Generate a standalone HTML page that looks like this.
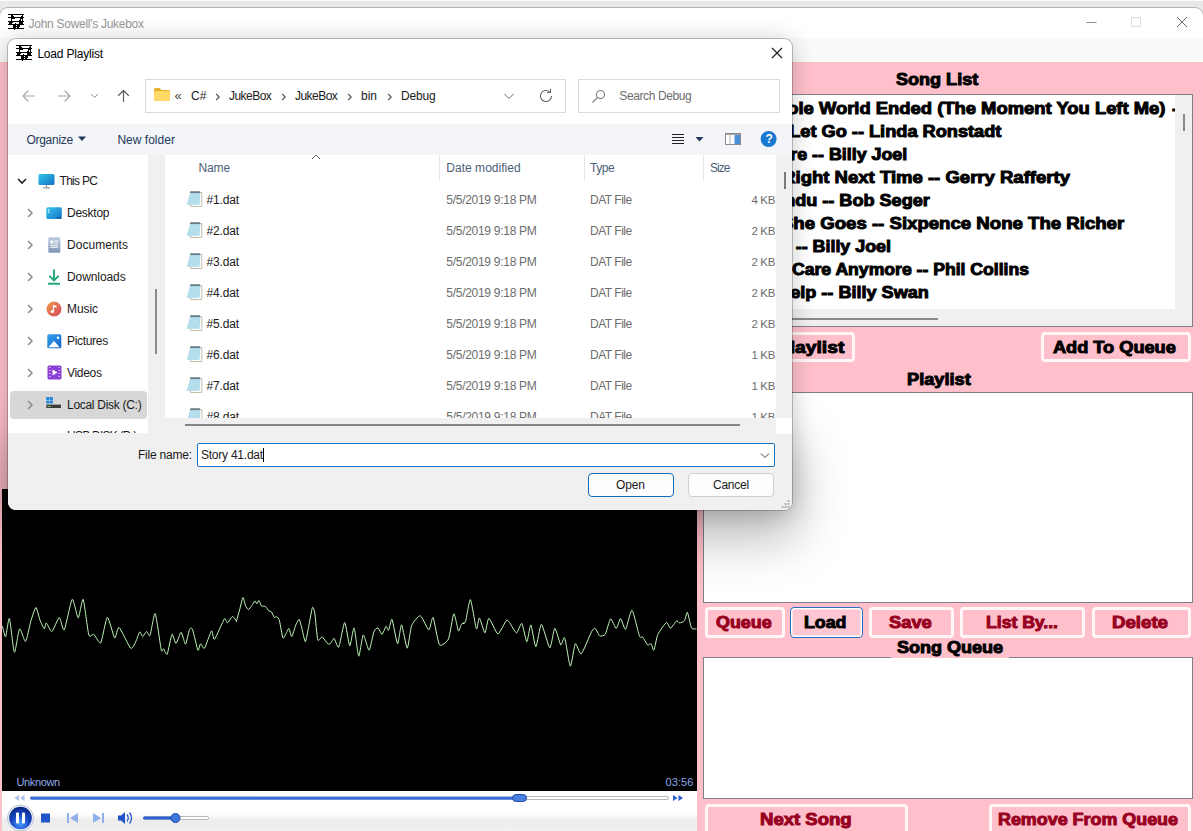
<!DOCTYPE html>
<html><head><meta charset="utf-8"><title>John Sowell's Jukebox</title>
<style>
html,body{margin:0;padding:0;}
body{width:1203px;height:831px;overflow:hidden;position:relative;background:#e9e9e9;font-family:"Liberation Sans",sans-serif;}
.a{position:absolute;display:block;}
.t{position:absolute;white-space:nowrap;display:block;}
#win{left:0;top:8px;width:1203px;height:840px;background:#fff;border-radius:8px 8px 0 0;box-shadow:0 0 0 1px #b4b4b4;overflow:hidden;}
.pb{position:absolute;box-sizing:border-box;border:3px solid #fff6f8;border-radius:4px;background:#ffc0cb;}
.pb.focus{border:1px solid #2a6fc0;box-shadow:inset 0 0 0 1.5px #fff;background:#ffc7d1;border-radius:4px;}
.lb{position:absolute;box-sizing:border-box;border:1px solid #7f7f86;background:#fff;overflow:hidden;}
#dlg{left:8px;top:39px;width:784px;height:471px;background:#fff;border-radius:8px;box-shadow:0 0 0 1px rgba(0,0,0,.22),0 2px 24px rgba(0,0,0,.22);}
</style></head><body>

<div class="a" style="left:0;top:0;width:1203px;height:1px;background:#fbfbfb"></div>
<div id="win" class="a">
<div class="a" style="left:0;top:30px;width:1203px;height:24px;background:#fafafa"></div>
<div class="a" style="left:0;top:54px;width:1203px;height:790px;background:#ffc0cb"></div>
</div>
<svg class="a" style="left:8px;top:14px" width="16" height="16" viewBox="0 0 16 16" shape-rendering="crispEdges"><rect x="0" y="0" width="16" height="1" fill="#000"/><rect x="3" y="1" width="2" height="1" fill="#000"/><rect x="14" y="1" width="1" height="1" fill="#000"/><rect x="3" y="2" width="3" height="1" fill="#000"/><rect x="13" y="2" width="2" height="1" fill="#000"/><rect x="0" y="3" width="16" height="1" fill="#000"/><rect x="3" y="4" width="2" height="1" fill="#000"/><rect x="5" y="4" width="2" height="1" fill="#000"/><rect x="12" y="4" width="3" height="1" fill="#000"/><rect x="3" y="5" width="1" height="1" fill="#000"/><rect x="12" y="5" width="1" height="1" fill="#000"/><rect x="14" y="5" width="1" height="1" fill="#000"/><rect x="3" y="6" width="1" height="1" fill="#000"/><rect x="11" y="6" width="2" height="1" fill="#000"/><rect x="14" y="6" width="1" height="1" fill="#000"/><rect x="0" y="7" width="16" height="1" fill="#000"/><rect x="1" y="8" width="4" height="1" fill="#000"/><rect x="11" y="8" width="4" height="1" fill="#000"/><rect x="1" y="9" width="3" height="1" fill="#000"/><rect x="7" y="9" width="1" height="1" fill="#000"/><rect x="11" y="9" width="4" height="1" fill="#000"/><rect x="0" y="10" width="16" height="1" fill="#000"/><rect x="5" y="11" width="3" height="1" fill="#000"/><rect x="9" y="11" width="3" height="1" fill="#000"/><rect x="5" y="12" width="7" height="1" fill="#000"/><rect x="5" y="13" width="3" height="1" fill="#000"/><rect x="9" y="13" width="2" height="1" fill="#000"/><rect x="0" y="14" width="16" height="1" fill="#000"/><rect x="6" y="15" width="1" height="1" fill="#000"/></svg>
<span class="t" style="font-size:12px;line-height:12px;top:18.00px;color:#9a9a9a;left:28.60px;letter-spacing:-0.284px;">John Sowell's Jukebox</span>
<svg class="a" style="left:1080px;top:12px" width="120" height="22" viewBox="0 0 120 22" fill="none"><path d="M6.5 10.5H16.500" stroke="#8a8a8a" stroke-width="1"/><rect x="51.500" y="5.500" width="9" height="9" stroke="#e0e0e0" stroke-width="1"/><path d="M97 5L107 15M107 5L97 15" stroke="#6a6a6a" stroke-width="1"/></svg>
<div class="a" style="left:2px;top:489px;width:695px;height:302px;background:#000"></div>
<svg class="a" style="left:0;top:560px" width="700" height="130" viewBox="0 560 700 130"><path fill="none" stroke="#c0f7ba" stroke-width="1" d="M2.4 625.9C2.7 627.0 4.9 637.6 5.6 636.9C6.3 636.1 8.5 617.0 9.4 618.5C10.3 620.0 13.3 651.2 14.4 652.2C15.4 653.3 18.4 630.0 19.6 628.9C20.7 627.8 24.4 642.2 25.5 641.4C26.7 640.6 29.9 624.3 30.9 620.9C32.0 617.5 35.0 607.6 35.9 607.5C36.8 607.4 39.1 617.8 39.9 619.9C40.7 622.0 43.7 628.6 44.3 628.9C44.9 629.2 45.5 622.6 46.3 622.9C47.0 623.2 50.6 632.0 51.9 631.5C53.2 630.9 58.0 617.7 59.3 617.5C60.5 617.3 62.9 631.7 64.2 629.9C65.5 628.1 70.8 600.5 72.2 599.4C73.6 598.2 77.1 617.9 78.2 617.9C79.3 617.9 82.1 597.7 83.2 599.4C84.2 601.0 87.7 631.4 88.8 634.9C89.8 638.4 92.6 633.5 93.8 634.3C95.0 635.1 99.4 644.5 100.7 642.8C102.1 641.1 105.9 617.8 107.3 617.3C108.7 616.8 113.5 636.8 114.7 637.9C115.9 638.9 117.5 626.4 119.1 627.5C120.7 628.5 129.0 646.8 130.7 648.2C132.3 649.7 134.8 643.5 135.7 641.8C136.6 640.2 139.0 632.4 139.7 631.9C140.3 631.3 141.9 636.5 142.6 636.5C143.3 636.4 145.9 631.6 146.6 631.5C147.4 631.4 149.2 637.3 150.0 635.5C150.9 633.7 154.1 612.1 155.2 613.5C156.3 615.0 160.4 646.3 161.2 649.8C162.0 653.4 163.0 648.4 163.6 648.8C164.2 649.3 166.3 655.7 167.2 654.2C168.0 652.8 171.1 635.3 172.0 634.3C172.8 633.2 175.0 643.6 176.0 643.4C176.9 643.2 180.2 632.2 181.1 632.3C182.1 632.3 184.7 644.5 185.5 644.2C186.4 644.0 188.8 631.0 189.5 629.5C190.2 628.0 191.7 627.4 192.5 629.5C193.4 631.6 197.1 648.8 197.9 650.2C198.7 651.7 199.8 644.0 200.5 643.8C201.2 643.6 203.4 649.5 204.5 648.2C205.6 646.9 210.5 631.8 211.5 630.9C212.5 630.0 213.2 640.4 214.5 639.3C215.8 638.1 223.1 620.5 224.4 618.9C225.7 617.3 226.6 623.1 227.4 622.9C228.2 622.7 231.5 616.7 232.4 616.5C233.3 616.3 236.0 620.4 236.4 620.9C236.8 621.4 236.1 622.4 236.4 621.3C236.7 620.2 238.9 612.3 239.6 609.9C240.2 607.6 242.4 598.0 243.0 597.6C243.6 597.2 245.0 604.7 245.6 605.9C246.1 607.1 247.7 609.6 248.4 609.5C249.0 609.5 251.3 606.4 251.9 605.5C252.6 604.7 254.4 601.1 254.9 600.9C255.4 600.8 256.5 604.0 256.9 603.9C257.3 603.9 258.5 600.3 258.9 600.5C259.4 600.7 260.9 605.3 261.5 605.9C262.2 606.5 264.8 606.0 265.5 606.5C266.2 607.0 268.3 610.4 268.9 610.9C269.5 611.5 271.0 611.3 271.5 611.9C272.0 612.6 273.8 617.0 274.3 617.5C274.8 618.0 276.4 616.2 276.9 616.5C277.4 616.8 278.9 618.8 279.5 620.9C280.1 623.0 282.2 636.6 282.9 637.9C283.5 639.2 285.3 634.8 285.9 633.9C286.5 632.9 288.3 628.2 288.9 628.5C289.5 628.7 291.1 636.8 291.8 636.5C292.5 636.1 295.1 626.6 295.8 624.9C296.6 623.2 298.6 619.0 299.2 619.5C299.9 620.0 301.6 627.6 302.2 629.9C302.8 632.1 304.8 642.2 305.4 641.8C306.1 641.4 308.1 629.3 308.8 625.9C309.5 622.5 311.8 608.8 312.4 607.5C313.0 606.2 314.2 609.7 314.8 612.9C315.3 616.1 317.0 637.5 317.8 639.9C318.5 642.2 321.2 636.5 322.2 636.9C323.2 637.3 326.9 643.2 327.8 643.8C328.6 644.5 330.1 643.8 330.7 643.2C331.4 642.7 333.3 637.9 334.1 638.3C334.9 638.7 337.7 648.8 338.7 647.2C339.8 645.7 343.6 622.6 344.7 622.5C345.8 622.4 348.8 645.3 349.7 645.8C350.6 646.4 353.2 626.8 354.1 627.9C355.0 628.9 357.8 655.5 358.7 656.2C359.6 656.9 362.2 635.5 363.3 634.9C364.3 634.3 368.0 650.6 369.1 650.2C370.1 649.9 373.1 633.7 374.0 631.5C374.9 629.2 377.2 627.6 378.0 627.9C378.8 628.2 381.2 634.4 382.0 634.3C382.8 634.1 385.4 626.7 386.0 626.3C386.7 625.9 388.0 631.0 388.6 630.3C389.2 629.6 391.1 618.1 392.0 619.5C392.9 620.9 396.6 643.3 397.6 643.8C398.5 644.4 400.6 624.4 401.6 624.9C402.5 625.3 406.2 648.1 407.2 648.2C408.2 648.3 410.4 629.1 411.5 625.9C412.7 622.7 417.5 617.4 418.5 616.5C419.5 615.6 420.5 615.6 421.5 616.9C422.6 618.2 427.7 629.8 428.9 629.9C430.1 629.9 432.0 616.0 433.1 617.5C434.1 619.0 437.9 642.7 439.5 644.8C441.0 647.0 447.0 641.9 448.5 638.9C449.9 635.8 452.8 614.7 453.8 613.9C454.8 613.1 457.7 629.8 458.4 630.9C459.2 631.9 460.8 625.1 461.4 624.3C462.0 623.5 464.3 623.0 464.4 622.9C464.5 622.8 462.3 623.6 462.4 623.5C462.5 623.4 464.8 623.9 465.6 621.5C466.4 619.1 469.3 598.8 470.4 599.6C471.5 600.3 475.5 627.0 476.4 628.9C477.3 630.7 478.5 617.5 479.4 617.9C480.2 618.3 484.0 632.8 484.9 632.9C485.9 632.9 487.6 618.2 488.9 618.3C490.2 618.4 496.2 633.6 497.9 633.9C499.6 634.1 505.1 621.6 506.3 620.5C507.4 619.4 508.5 621.3 509.5 622.5C510.5 623.7 515.2 632.8 516.5 632.9C517.7 633.0 520.8 622.6 521.8 623.5C522.9 624.4 525.9 641.7 526.8 641.8C527.7 642.0 529.9 624.4 530.8 624.9C531.7 625.4 534.8 646.9 535.8 646.8C536.9 646.8 540.0 624.2 541.4 624.3C542.8 624.4 548.4 647.4 549.8 647.8C551.1 648.2 553.7 628.6 554.8 628.3C555.9 628.0 559.8 643.9 560.7 644.8C561.7 645.8 563.8 635.7 564.7 637.9C565.7 640.0 569.3 665.6 570.3 666.2C571.4 666.8 574.2 645.1 575.3 643.8C576.4 642.6 579.7 655.1 581.3 653.8C582.9 652.6 590.3 634.0 591.7 631.5C593.1 628.9 594.5 628.0 595.3 628.5C596.1 628.9 598.7 635.3 599.7 635.9C600.6 636.4 604.1 636.0 605.2 634.3C606.3 632.6 609.5 619.5 610.6 618.9C611.7 618.3 615.2 628.5 616.2 628.5C617.2 628.4 619.7 618.4 620.6 618.5C621.5 618.6 624.4 630.1 625.6 629.3C626.7 628.5 630.6 609.6 632.0 610.3C633.4 611.0 638.5 633.8 639.6 636.5C640.6 639.1 641.7 636.0 642.5 636.9C643.3 637.7 646.7 644.1 647.5 644.8C648.4 645.5 650.5 643.3 651.1 643.8C651.8 644.4 653.2 651.2 653.9 650.2C654.6 649.3 656.6 637.0 657.9 634.3C659.2 631.5 665.2 623.1 666.5 622.5C667.7 621.9 669.5 628.4 670.5 628.3C671.5 628.1 675.6 621.4 676.5 620.9C677.4 620.4 678.7 622.9 679.5 622.9C680.2 622.9 683.6 622.0 684.4 620.9C685.2 619.8 686.7 611.6 687.4 612.3C688.1 613.0 690.5 626.2 691.4 627.9C692.3 629.5 695.9 628.8 696.4 628.9"/></svg>
<span class="t" style="font-size:11px;line-height:11px;top:777.00px;color:#8fa8ea;left:16.50px;letter-spacing:-0.363px;">Unknown</span>
<span class="t" style="font-size:11px;line-height:11px;top:777.00px;color:#8fa8ea;left:665.50px;letter-spacing:0.104px;">03:56</span>
<div class="a" style="left:2px;top:791px;width:695px;height:40px;background:linear-gradient(#ffffff 0,#ffffff 58%,#ececec 72%,#f1f1f1 100%)"></div>
<svg class="a" style="left:0;top:791px" width="700" height="40" viewBox="0 791 700 40">
<defs><linearGradient id="gb" x1="0" y1="0" x2="0" y2="1"><stop offset="0" stop-color="#a8c2f2"/><stop offset=".45" stop-color="#2a5bd0"/><stop offset="1" stop-color="#4f86e6"/></linearGradient>
<radialGradient id="gp" cx=".5" cy=".75" r=".7"><stop offset="0" stop-color="#4aa0ff"/><stop offset=".55" stop-color="#1848c4"/><stop offset="1" stop-color="#0a2a8a"/></radialGradient></defs>
<rect x="30.500" y="796.500" width="638" height="3" rx="1.500" fill="#fff" stroke="#b9b9b9"/>
<rect x="30" y="796.3" width="489" height="3.4" rx="1.7" fill="url(#gb)"/>
<rect x="512.500" y="794.500" width="14" height="7" rx="3.500" fill="#4a80e0" stroke="#2450b0"/>
<path d="M19 795v6l-4.500-3zM24.500 795v6l-4.500-3z" fill="#a9c0ee"/>
<path d="M673 795v6l4.500-3zM678.500 795v6l4.500-3z" fill="#2a5bd0"/>
<circle cx="20.500" cy="818" r="13" fill="#eef2fb" stroke="#aab4cc" stroke-width=".8"/><circle cx="20.500" cy="818" r="11.300" fill="url(#gp)"/>
<rect x="16" y="812.500" width="3" height="11" rx="1" fill="#fff"/><rect x="22" y="812.500" width="3" height="11" rx="1" fill="#fff"/>
<rect x="41" y="813.500" width="9" height="9" fill="#1f55c8"/>
<path d="M67 813h2v10h-2zM78 813v10l-8-5z" fill="#8fb0ea"/>
<path d="M102 813h2v10h-2zM93 813v10l8-5z" fill="#8fb0ea"/>
<path d="M118 815.500h3l4-3.500v12l-4-3.500h-3z" fill="#1f55c8"/>
<path d="M127 814.500q2.500 3.500 0 7M129.500 812.500q4 5.500 0 11" fill="none" stroke="#1f55c8" stroke-width="1.300"/>
<rect x="143.500" y="816.500" width="65" height="3" rx="1.500" fill="#fff" stroke="#b9b9b9"/>
<rect x="143" y="816.500" width="32" height="3" rx="1.500" fill="#2f62d6"/>
<circle cx="175.500" cy="818" r="4.500" fill="#3d76dc" stroke="#1d48a8"/>
</svg>
<span class="t" style="font-size:16px;line-height:16px;top:72.00px;color:#000;left:896.40px;font-weight:700;-webkit-text-stroke:0.95px #000;transform:scaleX(1.1277);transform-origin:left center;">Song List</span>
<div class="lb" style="left:703px;top:94px;width:490px;height:233px">
<div class="a" style="right:0;top:0;width:17px;height:231px;background:#f0f0f0"></div>
<div class="a" style="left:0;bottom:0;width:488px;height:17px;background:#f0f0f0"></div>
<div class="a" style="left:30px;top:222.500px;width:204px;height:2px;background:#8a8a8a"></div>
<div class="a" style="left:478.500px;top:19px;width:2px;height:17px;background:#8a8a8a"></div>
</div>
<div class="a" style="left:704px;top:95px;width:471px;height:215px;overflow:hidden">
<span class="t" style="right:9.6px;top:5.86px;font-size:16px;line-height:16px;font-weight:700;-webkit-text-stroke:.95px #000;transform:scaleX(1.15);transform-origin:right center">My Whole World Ended (The Moment You Left Me)</span>
<span class="t" style="right:174.1px;top:28.86px;font-size:16px;line-height:16px;font-weight:700;-webkit-text-stroke:.95px #000;transform:scaleX(1.1366);transform-origin:right center">I Can't Let Go -- Linda Ronstadt</span>
<span class="t" style="right:267.9px;top:51.86px;font-size:16px;line-height:16px;font-weight:700;-webkit-text-stroke:.95px #000;transform:scaleX(1.115);transform-origin:right center">We Didn't Start The Fire -- Billy Joel</span>
<span class="t" style="right:105.0px;top:74.86px;font-size:16px;line-height:16px;font-weight:700;-webkit-text-stroke:.95px #000;transform:scaleX(1.1576);transform-origin:right center">Get It Right Next Time -- Gerry Rafferty</span>
<span class="t" style="right:244.8px;top:97.86px;font-size:16px;line-height:16px;font-weight:700;-webkit-text-stroke:.95px #000;transform:scaleX(1.13);transform-origin:right center">Katmandu -- Bob Seger</span>
<span class="t" style="right:51.0px;top:120.86px;font-size:16px;line-height:16px;font-weight:700;-webkit-text-stroke:.95px #000;transform:scaleX(1.163);transform-origin:right center">There She Goes -- Sixpence None The Richer</span>
<span class="t" style="right:284.5px;top:143.86px;font-size:16px;line-height:16px;font-weight:700;-webkit-text-stroke:.95px #000;transform:scaleX(1.115);transform-origin:right center">Honesty -- Billy Joel</span>
<span class="t" style="right:145.5px;top:166.86px;font-size:16px;line-height:16px;font-weight:700;-webkit-text-stroke:.95px #000;transform:scaleX(1.1);transform-origin:right center">I Don't Care Anymore -- Phil Collins</span>
<span class="t" style="right:246.4px;top:189.86px;font-size:16px;line-height:16px;font-weight:700;-webkit-text-stroke:.95px #000;transform:scaleX(1.13);transform-origin:right center">I Can Help -- Billy Swan</span>
<span class="t" style="left:463.4px;top:5.86px;font-size:16px;line-height:16px;font-weight:700;-webkit-text-stroke:.95px #000;transform:scaleX(1.15);transform-origin:left center">&nbsp;-- David Ruffin</span>
</div>
<div class="pb" style="left:706px;top:332px;width:149px;height:30px"></div>
<span class="t" style="font-size:16px;line-height:16px;top:340.00px;color:#000;right:359.00px;font-weight:700;-webkit-text-stroke:0.95px #000;transform:scaleX(1.2064);transform-origin:right center;">Add To Playlist</span>
<div class="pb" style="left:1041px;top:332px;width:150px;height:30px"></div><span class="t" style="font-size:16px;line-height:16px;top:340.00px;color:#000;left:1053.20px;font-weight:700;-webkit-text-stroke:0.95px #000;transform:scaleX(1.1356);transform-origin:left center;">Add To Queue</span>
<span class="t" style="font-size:16px;line-height:16px;top:372.00px;color:#000;left:907.20px;font-weight:700;-webkit-text-stroke:0.95px #000;transform:scaleX(1.1369);transform-origin:left center;">Playlist</span>
<div class="lb" style="left:703px;top:392px;width:490px;height:211px"></div>
<div class="pb" style="left:704.5px;top:606.5px;width:80px;height:31px"></div><span class="t" style="font-size:16px;line-height:16px;top:615.00px;color:#98001f;left:715.70px;font-weight:700;-webkit-text-stroke:0.95px #98001f;transform:scaleX(1.1185);transform-origin:left center;">Queue</span>
<div class="pb focus" style="left:790px;top:606.5px;width:73px;height:31px"></div><span class="t" style="font-size:16px;line-height:16px;top:615.00px;color:#000;left:803.80px;font-weight:700;-webkit-text-stroke:0.95px #000;transform:scaleX(1.1094);transform-origin:left center;">Load</span>
<div class="pb" style="left:868.6px;top:606.5px;width:85px;height:31px"></div><span class="t" style="font-size:16px;line-height:16px;top:615.00px;color:#98001f;left:888.50px;font-weight:700;-webkit-text-stroke:0.95px #98001f;transform:scaleX(1.1452);transform-origin:left center;">Save</span>
<div class="pb" style="left:960.4px;top:606.5px;width:125px;height:31px"></div><span class="t" style="font-size:16px;line-height:16px;top:615.00px;color:#98001f;left:985.50px;font-weight:700;-webkit-text-stroke:0.95px #98001f;transform:scaleX(1.0992);transform-origin:left center;">List By...</span>
<div class="pb" style="left:1092.4px;top:606.5px;width:99px;height:31px"></div><span class="t" style="font-size:16px;line-height:16px;top:615.00px;color:#98001f;left:1112.40px;font-weight:700;-webkit-text-stroke:0.95px #98001f;transform:scaleX(1.1659);transform-origin:left center;">Delete</span>
<div class="lb" style="left:703px;top:657px;width:490px;height:142px"></div>
<div class="a" style="left:891px;top:640px;width:118px;height:18px;background:#ffc0cb"></div>
<span class="t" style="font-size:16px;line-height:16px;top:640.00px;color:#000;left:896.50px;font-weight:700;-webkit-text-stroke:0.95px #000;transform:scaleX(1.1259);transform-origin:left center;">Song Queue</span>
<div class="pb" style="left:705px;top:804.3px;width:202.5px;height:40px"></div><span class="t" style="font-size:16px;line-height:16px;top:812.00px;color:#98001f;left:759.50px;font-weight:700;-webkit-text-stroke:0.95px #98001f;transform:scaleX(1.1589);transform-origin:left center;">Next Song</span>
<div class="pb" style="left:988.5px;top:804.3px;width:202.5px;height:40px"></div><span class="t" style="font-size:16px;line-height:16px;top:812.00px;color:#98001f;left:998.30px;font-weight:700;-webkit-text-stroke:0.95px #98001f;transform:scaleX(1.1184);transform-origin:left center;">Remove From Queue</span>
<div class="a" style="left:8px;top:420px;width:784px;height:90px;border-radius:8px;box-shadow:0 24px 50px 6px rgba(0,0,0,.26)"></div>
<div id="dlg" class="a"></div>
<div class="a" style="left:8px;top:39px;width:784px;height:471px;border-radius:8px;overflow:hidden"><div class="a" style="left:-8px;top:-39px;width:1203px;height:831px">
<svg class="a" style="left:16px;top:45px" width="16" height="16" viewBox="0 0 16 16" shape-rendering="crispEdges"><rect x="0" y="0" width="16" height="1" fill="#000"/><rect x="3" y="1" width="2" height="1" fill="#000"/><rect x="14" y="1" width="1" height="1" fill="#000"/><rect x="3" y="2" width="3" height="1" fill="#000"/><rect x="13" y="2" width="2" height="1" fill="#000"/><rect x="0" y="3" width="16" height="1" fill="#000"/><rect x="3" y="4" width="2" height="1" fill="#000"/><rect x="5" y="4" width="2" height="1" fill="#000"/><rect x="12" y="4" width="3" height="1" fill="#000"/><rect x="3" y="5" width="1" height="1" fill="#000"/><rect x="12" y="5" width="1" height="1" fill="#000"/><rect x="14" y="5" width="1" height="1" fill="#000"/><rect x="3" y="6" width="1" height="1" fill="#000"/><rect x="11" y="6" width="2" height="1" fill="#000"/><rect x="14" y="6" width="1" height="1" fill="#000"/><rect x="0" y="7" width="16" height="1" fill="#000"/><rect x="1" y="8" width="4" height="1" fill="#000"/><rect x="11" y="8" width="4" height="1" fill="#000"/><rect x="1" y="9" width="3" height="1" fill="#000"/><rect x="7" y="9" width="1" height="1" fill="#000"/><rect x="11" y="9" width="4" height="1" fill="#000"/><rect x="0" y="10" width="16" height="1" fill="#000"/><rect x="5" y="11" width="3" height="1" fill="#000"/><rect x="9" y="11" width="3" height="1" fill="#000"/><rect x="5" y="12" width="7" height="1" fill="#000"/><rect x="5" y="13" width="3" height="1" fill="#000"/><rect x="9" y="13" width="2" height="1" fill="#000"/><rect x="0" y="14" width="16" height="1" fill="#000"/><rect x="6" y="15" width="1" height="1" fill="#000"/></svg>
<span class="t" style="font-size:12px;line-height:12px;top:48.00px;color:#000;left:37.40px;letter-spacing:-0.196px;">Load Playlist</span>
<svg class="a" style="left:771px;top:47px" width="12" height="12" viewBox="0 0 12 12"><path d="M1 1L11 11M11 1L1 11" stroke="#1a1a1a" stroke-width="1.100" fill="none"/></svg>
<svg class="a" style="left:16px;top:84px" width="120" height="24" viewBox="16 84 120 24" fill="none" stroke-linecap="round" stroke-linejoin="round">
<path d="M34.500 96H23M28 91l-5 5 5 5" stroke="#a6a6a6" stroke-width="1.200"/>
<path d="M58.500 96H70M65 91l5 5-5 5" stroke="#a6a6a6" stroke-width="1.200"/>
<path d="M91.500 94.500l3 3 3-3" stroke="#8a8a8a" stroke-width="1"/>
<path d="M123.500 101.500V90.500M118.500 95.500l5-5 5 5" stroke="#5c5c5c" stroke-width="1.200"/></svg>
<div class="a" style="left:145px;top:79px;width:421px;height:34px;box-sizing:border-box;border:1px solid #d9d9d9;background:#fff"></div>
<svg class="a" style="left:153px;top:87px" width="18" height="16" viewBox="0 0 18 16"><path d="M1 2.500q0-1.500 1.500-1.500h4l2 2h7q1.500 0 1.500 1.500v8q0 1.500-1.500 1.500h-13q-1.500 0-1.500-1.500z" fill="#e8b12e"/><path d="M1 5.500q0-1.500 1.500-1.500h13q1.500 0 1.500 1.500v7q0 1.500-1.500 1.500h-13q-1.500 0-1.500-1.500z" fill="#ffd866"/></svg>
<span class="t" style="font-size:13px;line-height:13px;top:89.00px;color:#444;left:174.50px;letter-spacing:0.766px;">«</span>
<span class="t" style="font-size:12px;line-height:12px;top:90.00px;color:#1a1a1a;left:191.00px;letter-spacing:0.104px;">C#</span>
<span class="t" style="font-size:12px;line-height:12px;top:90.00px;color:#1a1a1a;left:229.00px;letter-spacing:-0.543px;">JukeBox</span>
<span class="t" style="font-size:12px;line-height:12px;top:90.00px;color:#1a1a1a;left:295.00px;letter-spacing:-0.543px;">JukeBox</span>
<span class="t" style="font-size:12px;line-height:12px;top:90.00px;color:#1a1a1a;left:361.00px;letter-spacing:-0.006px;">bin</span>
<span class="t" style="font-size:12px;line-height:12px;top:90.00px;color:#1a1a1a;left:401.00px;letter-spacing:-0.194px;">Debug</span>
<svg class="a" style="left:215px;top:93px" width="6" height="8" viewBox="0 0 6 8"><path d="M1.200 1l3 3-3 3" stroke="#555" stroke-width="1.100" fill="none"/></svg>
<svg class="a" style="left:281px;top:93px" width="6" height="8" viewBox="0 0 6 8"><path d="M1.200 1l3 3-3 3" stroke="#555" stroke-width="1.100" fill="none"/></svg>
<svg class="a" style="left:347px;top:93px" width="6" height="8" viewBox="0 0 6 8"><path d="M1.200 1l3 3-3 3" stroke="#555" stroke-width="1.100" fill="none"/></svg>
<svg class="a" style="left:387px;top:93px" width="6" height="8" viewBox="0 0 6 8"><path d="M1.200 1l3 3-3 3" stroke="#555" stroke-width="1.100" fill="none"/></svg>
<svg class="a" style="left:503px;top:92px" width="12" height="8" viewBox="0 0 12 8"><path d="M1.500 2l4.500 4.500L10.500 2" stroke="#666" stroke-width="1" fill="none"/></svg>
<svg class="a" style="left:538px;top:88px" width="16" height="16" viewBox="0 0 16 16" fill="none"><path d="M13.500 8a5.500 5.500 0 1 1-1.800-4.100" stroke="#666" stroke-width="1.100"/><path d="M12.500 1v3.500H9" stroke="#666" stroke-width="1.100"/></svg>
<div class="a" style="left:578px;top:79px;width:202px;height:34px;box-sizing:border-box;border:1px solid #d9d9d9;background:#fff"></div>
<svg class="a" style="left:591px;top:89px" width="16" height="16" viewBox="0 0 16 16" fill="none"><circle cx="9.500" cy="5.500" r="4" stroke="#7a7a7a" stroke-width="1.100"/><path d="M6.500 8.500L1.500 13.500" stroke="#7a7a7a" stroke-width="1.100"/></svg>
<span class="t" style="font-size:12px;line-height:12px;top:90.00px;color:#6e6e6e;left:619.30px;letter-spacing:-0.384px;">Search Debug</span>
<div class="a" style="left:8px;top:124px;width:784px;height:30.500px;background:#f3f5f8"></div>
<span class="t" style="font-size:12px;line-height:12px;top:134.00px;color:#24385c;left:26.50px;letter-spacing:-0.294px;">Organize</span>
<svg class="a" style="left:77px;top:136px" width="10" height="6" viewBox="0 0 10 6"><path d="M1 .5h8l-4 4.500z" fill="#24385c"/></svg>
<span class="t" style="font-size:12px;line-height:12px;top:134.00px;color:#24385c;left:117.40px;letter-spacing:0.015px;">New folder</span>
<svg class="a" style="left:670px;top:131px" width="110" height="18" viewBox="670 131 110 18" fill="none"><path d="M672 134.500h12M672 137.500h12M672 140.500h12M672 143.500h12" stroke="#222" stroke-width="1"/><path d="M695.500 137h8l-4 4.500z" fill="#24385c"/><rect x="725.500" y="133.500" width="15" height="11" stroke="#8a8a8a" fill="#fff"/><path d="M725 134h16" stroke="#8a8a8a" stroke-width="1.600"/><rect x="734.500" y="135" width="5.500" height="9" fill="#4a90d9"/><path d="M730 135v9" stroke="#b0b0b0"/><circle cx="768.600" cy="139" r="8" fill="#1a78d2"/></svg>
<span class="t" style="font-size:12px;line-height:12px;top:133.00px;color:#fff;left:765.60px;font-weight:700;">?</span>
<div class="a" style="left:148px;top:155px;width:17px;height:278px;background:#f0f0f0"></div>
<div class="a" style="left:155px;top:289px;width:2px;height:65px;background:#8c8c8c"></div>
<div class="a" style="left:10px;top:391px;width:137px;height:27.500px;background:#d7d7d7;border-radius:4px"></div>
<span class="t" style="font-size:12px;line-height:12px;top:175.00px;color:#1a1a1a;left:59.60px;letter-spacing:-0.737px;">This PC</span>
<span class="t" style="font-size:12px;line-height:12px;top:207.00px;color:#1a1a1a;left:67.00px;letter-spacing:-0.251px;">Desktop</span>
<span class="t" style="font-size:12px;line-height:12px;top:239.00px;color:#1a1a1a;left:67.00px;letter-spacing:0.035px;">Documents</span>
<span class="t" style="font-size:12px;line-height:12px;top:271.00px;color:#1a1a1a;left:67.00px;letter-spacing:-0.091px;">Downloads</span>
<span class="t" style="font-size:12px;line-height:12px;top:303.00px;color:#1a1a1a;left:67.00px;letter-spacing:-0.076px;">Music</span>
<span class="t" style="font-size:12px;line-height:12px;top:335.00px;color:#1a1a1a;left:67.00px;letter-spacing:-0.315px;">Pictures</span>
<span class="t" style="font-size:12px;line-height:12px;top:367.00px;color:#1a1a1a;left:67.00px;letter-spacing:-0.306px;">Videos</span>
<span class="t" style="font-size:12px;line-height:12px;top:399.00px;color:#1a1a1a;left:67.00px;letter-spacing:-0.289px;">Local Disk (C:)</span>
<span class="t" style="font-size:12px;line-height:12px;top:430.00px;color:#1a1a1a;left:67.00px;letter-spacing:-0.748px;">USB DISK (D:)</span>
<svg class="a" style="left:17px;top:176px" width="10" height="10" viewBox="0 0 10 10"><path d="M1 3l4 4 4-4" stroke="#222" stroke-width="1.600" fill="none"/></svg>
<svg class="a" style="left:26px;top:208px" width="8" height="10" viewBox="0 0 8 10"><path d="M2 1l4 4-4 4" stroke="#8a8a8a" stroke-width="1.500" fill="none"/></svg>
<svg class="a" style="left:26px;top:240px" width="8" height="10" viewBox="0 0 8 10"><path d="M2 1l4 4-4 4" stroke="#8a8a8a" stroke-width="1.500" fill="none"/></svg>
<svg class="a" style="left:26px;top:272px" width="8" height="10" viewBox="0 0 8 10"><path d="M2 1l4 4-4 4" stroke="#8a8a8a" stroke-width="1.500" fill="none"/></svg>
<svg class="a" style="left:26px;top:304px" width="8" height="10" viewBox="0 0 8 10"><path d="M2 1l4 4-4 4" stroke="#8a8a8a" stroke-width="1.500" fill="none"/></svg>
<svg class="a" style="left:26px;top:336px" width="8" height="10" viewBox="0 0 8 10"><path d="M2 1l4 4-4 4" stroke="#8a8a8a" stroke-width="1.500" fill="none"/></svg>
<svg class="a" style="left:26px;top:368px" width="8" height="10" viewBox="0 0 8 10"><path d="M2 1l4 4-4 4" stroke="#8a8a8a" stroke-width="1.500" fill="none"/></svg>
<svg class="a" style="left:26px;top:400px" width="8" height="10" viewBox="0 0 8 10"><path d="M2 1l4 4-4 4" stroke="#8a8a8a" stroke-width="1.500" fill="none"/></svg>
<svg class="a" style="left:38px;top:173px" width="17" height="16" viewBox="0 0 17 16"><defs><linearGradient id="mon" x1="0" y1="0" x2="1" y2="1"><stop offset="0" stop-color="#2fc4e8"/><stop offset="1" stop-color="#1672c8"/></linearGradient></defs><rect x=".5" y="1" width="16" height="11" rx="1.500" fill="url(#mon)"/><path d="M8.500 12v2.500M5 14.800h7" stroke="#9a9a9a" stroke-width="1.200"/></svg>
<svg class="a" style="left:46px;top:207px" width="17" height="13" viewBox="0 0 17 13"><defs><linearGradient id="dsk" x1="0" y1="0" x2="1" y2="1"><stop offset="0" stop-color="#3cc6ec"/><stop offset="1" stop-color="#1272c8"/></linearGradient></defs><rect x=".3" y=".3" width="15.500" height="11.700" rx="1.500" fill="url(#dsk)"/><rect x="2" y="2.200" width="1.300" height="1.300" fill="#fff"/><rect x="2" y="4.500" width="1.300" height="1.300" fill="#fff"/><rect x="11" y="10" width="3.500" height="1.200" fill="#0b4f9a"/></svg>
<svg class="a" style="left:48px;top:237px" width="13" height="16" viewBox="0 0 13 16"><defs><linearGradient id="doc" x1="0" y1="0" x2="0" y2="1"><stop offset="0" stop-color="#bccadd"/><stop offset="1" stop-color="#7d95b8"/></linearGradient></defs><rect x=".3" y=".3" width="12" height="15.400" rx="1.500" fill="url(#doc)"/><rect x="2.300" y="3.500" width="3" height="3" fill="#fff"/><path d="M6.300 4h4M6.300 6h4M2.300 8.200h8M2.300 10.300h8" stroke="#fff" stroke-width="1"/></svg>
<svg class="a" style="left:47px;top:269px" width="14" height="16" viewBox="0 0 14 16" fill="none"><path d="M7 .5v10.500M2.300 6.800l4.700 4.700 4.700-4.700" stroke="#21a67e" stroke-width="1.900"/><path d="M1 14.800h12" stroke="#21a67e" stroke-width="1.900"/></svg>
<svg class="a" style="left:46px;top:301px" width="16" height="16" viewBox="0 0 16 16"><defs><linearGradient id="mus" x1="0" y1="0" x2="1" y2="1"><stop offset="0" stop-color="#f39a4a"/><stop offset="1" stop-color="#d2465f"/></linearGradient></defs><circle cx="8" cy="8" r="7.500" fill="url(#mus)"/><path d="M7.500 4v6.200" stroke="#fff" stroke-width="1.200"/><circle cx="6.300" cy="10.500" r="1.600" fill="#fff"/><path d="M7.500 4l3 1v1.800l-3-1z" fill="#fff"/></svg>
<svg class="a" style="left:47px;top:333.500px" width="15" height="15" viewBox="0 0 15 15"><defs><linearGradient id="pic" x1="0" y1="0" x2="1" y2="1"><stop offset="0" stop-color="#34a4ec"/><stop offset="1" stop-color="#1462cc"/></linearGradient></defs><rect x=".3" y=".3" width="14" height="14" rx="1.500" fill="url(#pic)"/><path d="M1.300 13.300l5.700-6.300 5.700 6.300z" fill="#fff"/><circle cx="11" cy="3.800" r="1.300" fill="#fff"/></svg>
<svg class="a" style="left:47px;top:365px" width="15" height="15" viewBox="0 0 15 15"><rect x=".5" y=".5" width="14" height="14" rx="1.500" fill="#8a3fd6"/><path d="M5.500 4.500v6l5-3z" fill="#fff"/><path d="M2 2.500h1.500M2 5.500h1.500M2 8.500h1.500M2 11.500h1.500M11.500 2.500H13M11.500 5.500H13M11.500 8.500H13M11.500 11.500H13" stroke="#d9b8f5" stroke-width="1.200"/></svg>
<svg class="a" style="left:46px;top:397px" width="17" height="12" viewBox="0 0 17 12"><rect x=".3" y="0" width="3" height="3" fill="#1b86e0"/><rect x="3.800" y="0" width="3" height="3" fill="#1b86e0"/><rect x=".3" y="3.500" width="3" height="3" fill="#1b86e0"/><rect x="3.800" y="3.500" width="3" height="3" fill="#1b86e0"/><rect x=".3" y="7" width="14.700" height="1" fill="#9a9a9a"/><rect x=".3" y="8" width="14.700" height="3" rx=".5" fill="#3c3c3c"/><rect x="1.500" y="9" width="3" height="1" fill="#6fd36f"/></svg>
<div class="a" style="left:776px;top:155px;width:16px;height:263px;background:#f0f0f0"></div>
<div class="a" style="left:165px;top:418px;width:611px;height:15px;background:#f0f0f0"></div>
<div class="a" style="left:783.500px;top:171.500px;width:2px;height:17px;background:#7a7a7a"></div>
<div class="a" style="left:185px;top:423.5px;width:555px;height:2px;background:#858585"></div>
<div class="a" style="left:439px;top:155px;width:1px;height:25px;background:#e5e5e5"></div>
<div class="a" style="left:583.5px;top:155px;width:1px;height:25px;background:#e5e5e5"></div>
<div class="a" style="left:703px;top:155px;width:1px;height:25px;background:#e5e5e5"></div>
<svg class="a" style="left:311px;top:154px" width="10" height="6" viewBox="0 0 10 6"><path d="M1 5l4-4 4 4" stroke="#666" stroke-width="1" fill="none"/></svg>
<span class="t" style="font-size:12px;line-height:12px;top:162.00px;color:#4c607a;left:198.50px;letter-spacing:-0.147px;">Name</span>
<span class="t" style="font-size:12px;line-height:12px;top:162.00px;color:#4c607a;left:446.30px;letter-spacing:0.028px;">Date modified</span>
<span class="t" style="font-size:12px;line-height:12px;top:162.00px;color:#4c607a;left:590.00px;letter-spacing:-0.433px;">Type</span>
<span class="t" style="font-size:12px;line-height:12px;top:162.00px;color:#4c607a;left:709.90px;letter-spacing:-0.955px;">Size</span>
<div class="a" style="left:165px;top:182px;width:611px;height:236px;overflow:hidden"><div class="a" style="left:-165px;top:-182px;width:1203px;height:831px">
<svg class="a" style="left:186px;top:190px" width="17" height="18" viewBox="0 0 17 18"><path d="M5 2.500h10.800v14h-11.300z" fill="#fff" stroke="#bdb5a0" stroke-width=".9"/><path d="M4.200 2.600h10.200l-.9 12.200h-12.600z" fill="#a6d8e8"/><path d="M4 5h9.800M3.700 7h9.900M3.300 9h10.100M2.900 11h10.300M2.500 13h10.500" stroke="#cbe9f2" stroke-width=".8"/><path d="M4.300 2.800l.8-1.500.8 1.500.8-1.500.8 1.500.8-1.500.8 1.500.8-1.500.8 1.500.8-1.500.8 1.500.8-1.500.8 1.500" fill="none" stroke="#3a4a55" stroke-width=".8"/></svg>
<span class="t" style="font-size:12px;line-height:12px;top:194.00px;color:#1a1a1a;left:206.50px;letter-spacing:-0.159px;">#1.dat</span>
<span class="t" style="font-size:12px;line-height:12px;top:194.00px;color:#6d6d6d;left:446.30px;letter-spacing:-0.280px;">5/5/2019 9:18 PM</span>
<span class="t" style="font-size:12px;line-height:12px;top:194.00px;color:#6d6d6d;left:590.00px;letter-spacing:-0.475px;">DAT File</span>
<span class="t" style="font-size:11.5px;line-height:11.5px;top:195.00px;color:#6d6d6d;right:427.50px;word-spacing:-1px;">4 KB</span>
<svg class="a" style="left:186px;top:221px" width="17" height="18" viewBox="0 0 17 18"><path d="M5 2.500h10.800v14h-11.300z" fill="#fff" stroke="#bdb5a0" stroke-width=".9"/><path d="M4.200 2.600h10.200l-.9 12.200h-12.600z" fill="#a6d8e8"/><path d="M4 5h9.800M3.700 7h9.900M3.300 9h10.100M2.900 11h10.300M2.500 13h10.500" stroke="#cbe9f2" stroke-width=".8"/><path d="M4.300 2.800l.8-1.500.8 1.500.8-1.500.8 1.500.8-1.500.8 1.500.8-1.500.8 1.500.8-1.500.8 1.500.8-1.500.8 1.500" fill="none" stroke="#3a4a55" stroke-width=".8"/></svg>
<span class="t" style="font-size:12px;line-height:12px;top:225.00px;color:#1a1a1a;left:206.50px;letter-spacing:-0.159px;">#2.dat</span>
<span class="t" style="font-size:12px;line-height:12px;top:225.00px;color:#6d6d6d;left:446.30px;letter-spacing:-0.280px;">5/5/2019 9:18 PM</span>
<span class="t" style="font-size:12px;line-height:12px;top:225.00px;color:#6d6d6d;left:590.00px;letter-spacing:-0.475px;">DAT File</span>
<span class="t" style="font-size:11.5px;line-height:11.5px;top:226.00px;color:#6d6d6d;right:427.50px;word-spacing:-1px;">2 KB</span>
<svg class="a" style="left:186px;top:252px" width="17" height="18" viewBox="0 0 17 18"><path d="M5 2.500h10.800v14h-11.300z" fill="#fff" stroke="#bdb5a0" stroke-width=".9"/><path d="M4.200 2.600h10.200l-.9 12.200h-12.600z" fill="#a6d8e8"/><path d="M4 5h9.800M3.700 7h9.900M3.300 9h10.100M2.900 11h10.300M2.500 13h10.500" stroke="#cbe9f2" stroke-width=".8"/><path d="M4.300 2.800l.8-1.500.8 1.500.8-1.500.8 1.500.8-1.500.8 1.500.8-1.500.8 1.500.8-1.500.8 1.500.8-1.500.8 1.500" fill="none" stroke="#3a4a55" stroke-width=".8"/></svg>
<span class="t" style="font-size:12px;line-height:12px;top:256.00px;color:#1a1a1a;left:206.50px;letter-spacing:-0.159px;">#3.dat</span>
<span class="t" style="font-size:12px;line-height:12px;top:256.00px;color:#6d6d6d;left:446.30px;letter-spacing:-0.280px;">5/5/2019 9:18 PM</span>
<span class="t" style="font-size:12px;line-height:12px;top:256.00px;color:#6d6d6d;left:590.00px;letter-spacing:-0.475px;">DAT File</span>
<span class="t" style="font-size:11.5px;line-height:11.5px;top:257.00px;color:#6d6d6d;right:427.50px;word-spacing:-1px;">2 KB</span>
<svg class="a" style="left:186px;top:283px" width="17" height="18" viewBox="0 0 17 18"><path d="M5 2.500h10.800v14h-11.300z" fill="#fff" stroke="#bdb5a0" stroke-width=".9"/><path d="M4.200 2.600h10.200l-.9 12.200h-12.600z" fill="#a6d8e8"/><path d="M4 5h9.800M3.700 7h9.900M3.300 9h10.100M2.900 11h10.300M2.500 13h10.500" stroke="#cbe9f2" stroke-width=".8"/><path d="M4.300 2.800l.8-1.500.8 1.500.8-1.500.8 1.500.8-1.500.8 1.500.8-1.500.8 1.500.8-1.500.8 1.500.8-1.500.8 1.500" fill="none" stroke="#3a4a55" stroke-width=".8"/></svg>
<span class="t" style="font-size:12px;line-height:12px;top:287.00px;color:#1a1a1a;left:206.50px;letter-spacing:-0.159px;">#4.dat</span>
<span class="t" style="font-size:12px;line-height:12px;top:287.00px;color:#6d6d6d;left:446.30px;letter-spacing:-0.280px;">5/5/2019 9:18 PM</span>
<span class="t" style="font-size:12px;line-height:12px;top:287.00px;color:#6d6d6d;left:590.00px;letter-spacing:-0.475px;">DAT File</span>
<span class="t" style="font-size:11.5px;line-height:11.5px;top:288.00px;color:#6d6d6d;right:427.50px;word-spacing:-1px;">2 KB</span>
<svg class="a" style="left:186px;top:314px" width="17" height="18" viewBox="0 0 17 18"><path d="M5 2.500h10.800v14h-11.300z" fill="#fff" stroke="#bdb5a0" stroke-width=".9"/><path d="M4.200 2.600h10.200l-.9 12.200h-12.600z" fill="#a6d8e8"/><path d="M4 5h9.800M3.700 7h9.900M3.300 9h10.100M2.900 11h10.300M2.500 13h10.500" stroke="#cbe9f2" stroke-width=".8"/><path d="M4.300 2.800l.8-1.500.8 1.500.8-1.500.8 1.500.8-1.500.8 1.500.8-1.500.8 1.500.8-1.500.8 1.500.8-1.500.8 1.500" fill="none" stroke="#3a4a55" stroke-width=".8"/></svg>
<span class="t" style="font-size:12px;line-height:12px;top:318.00px;color:#1a1a1a;left:206.50px;letter-spacing:-0.159px;">#5.dat</span>
<span class="t" style="font-size:12px;line-height:12px;top:318.00px;color:#6d6d6d;left:446.30px;letter-spacing:-0.280px;">5/5/2019 9:18 PM</span>
<span class="t" style="font-size:12px;line-height:12px;top:318.00px;color:#6d6d6d;left:590.00px;letter-spacing:-0.475px;">DAT File</span>
<span class="t" style="font-size:11.5px;line-height:11.5px;top:319.00px;color:#6d6d6d;right:427.50px;word-spacing:-1px;">2 KB</span>
<svg class="a" style="left:186px;top:345px" width="17" height="18" viewBox="0 0 17 18"><path d="M5 2.500h10.800v14h-11.300z" fill="#fff" stroke="#bdb5a0" stroke-width=".9"/><path d="M4.200 2.600h10.200l-.9 12.200h-12.600z" fill="#a6d8e8"/><path d="M4 5h9.800M3.700 7h9.900M3.300 9h10.100M2.900 11h10.300M2.500 13h10.500" stroke="#cbe9f2" stroke-width=".8"/><path d="M4.300 2.800l.8-1.500.8 1.500.8-1.500.8 1.500.8-1.500.8 1.500.8-1.500.8 1.500.8-1.500.8 1.500.8-1.500.8 1.500" fill="none" stroke="#3a4a55" stroke-width=".8"/></svg>
<span class="t" style="font-size:12px;line-height:12px;top:349.00px;color:#1a1a1a;left:206.50px;letter-spacing:-0.159px;">#6.dat</span>
<span class="t" style="font-size:12px;line-height:12px;top:349.00px;color:#6d6d6d;left:446.30px;letter-spacing:-0.280px;">5/5/2019 9:18 PM</span>
<span class="t" style="font-size:12px;line-height:12px;top:349.00px;color:#6d6d6d;left:590.00px;letter-spacing:-0.475px;">DAT File</span>
<span class="t" style="font-size:11.5px;line-height:11.5px;top:350.00px;color:#6d6d6d;right:427.50px;word-spacing:-1px;">1 KB</span>
<svg class="a" style="left:186px;top:376px" width="17" height="18" viewBox="0 0 17 18"><path d="M5 2.500h10.800v14h-11.300z" fill="#fff" stroke="#bdb5a0" stroke-width=".9"/><path d="M4.200 2.600h10.200l-.9 12.200h-12.600z" fill="#a6d8e8"/><path d="M4 5h9.800M3.700 7h9.900M3.300 9h10.100M2.900 11h10.300M2.500 13h10.500" stroke="#cbe9f2" stroke-width=".8"/><path d="M4.300 2.800l.8-1.500.8 1.500.8-1.500.8 1.500.8-1.500.8 1.500.8-1.500.8 1.500.8-1.500.8 1.500.8-1.500.8 1.500" fill="none" stroke="#3a4a55" stroke-width=".8"/></svg>
<span class="t" style="font-size:12px;line-height:12px;top:380.00px;color:#1a1a1a;left:206.50px;letter-spacing:-0.159px;">#7.dat</span>
<span class="t" style="font-size:12px;line-height:12px;top:380.00px;color:#6d6d6d;left:446.30px;letter-spacing:-0.280px;">5/5/2019 9:18 PM</span>
<span class="t" style="font-size:12px;line-height:12px;top:380.00px;color:#6d6d6d;left:590.00px;letter-spacing:-0.475px;">DAT File</span>
<span class="t" style="font-size:11.5px;line-height:11.5px;top:381.00px;color:#6d6d6d;right:427.50px;word-spacing:-1px;">1 KB</span>
<svg class="a" style="left:186px;top:407px" width="17" height="18" viewBox="0 0 17 18"><path d="M5 2.500h10.800v14h-11.300z" fill="#fff" stroke="#bdb5a0" stroke-width=".9"/><path d="M4.200 2.600h10.200l-.9 12.200h-12.600z" fill="#a6d8e8"/><path d="M4 5h9.800M3.700 7h9.900M3.300 9h10.100M2.900 11h10.300M2.500 13h10.500" stroke="#cbe9f2" stroke-width=".8"/><path d="M4.300 2.800l.8-1.500.8 1.500.8-1.500.8 1.500.8-1.500.8 1.500.8-1.500.8 1.500.8-1.500.8 1.500.8-1.500.8 1.500" fill="none" stroke="#3a4a55" stroke-width=".8"/></svg>
<span class="t" style="font-size:12px;line-height:12px;top:411.00px;color:#1a1a1a;left:206.50px;letter-spacing:-0.159px;">#8.dat</span>
<span class="t" style="font-size:12px;line-height:12px;top:411.00px;color:#6d6d6d;left:446.30px;letter-spacing:-0.280px;">5/5/2019 9:18 PM</span>
<span class="t" style="font-size:12px;line-height:12px;top:411.00px;color:#6d6d6d;left:590.00px;letter-spacing:-0.475px;">DAT File</span>
<span class="t" style="font-size:11.5px;line-height:11.5px;top:412.00px;color:#6d6d6d;right:427.50px;word-spacing:-1px;">1 KB</span>
</div></div>
<div class="a" style="left:8px;top:433px;width:784px;height:77px;background:#f0f0f0"></div>
<div class="a" style="left:776px;top:418px;width:16px;height:15.500px;background:#fff"></div>
<span class="t" style="font-size:12px;line-height:12px;top:449.00px;color:#1a1a1a;left:138.00px;letter-spacing:-0.214px;">File name:</span>
<div class="a" style="left:197px;top:443px;width:578px;height:23.5px;box-sizing:border-box;border:1px solid #1a74c2;border-radius:2px;background:#fff"></div>
<span class="t" style="font-size:12px;line-height:12px;top:449.00px;color:#1a1a1a;left:201.00px;letter-spacing:-0.236px;">Story 41.dat</span>
<div class="a" style="left:263px;top:448px;width:1px;height:14px;background:#000"></div>
<svg class="a" style="left:760px;top:452px" width="10" height="7" viewBox="0 0 10 7"><path d="M1 1.500l4 4 4-4" stroke="#444" stroke-width="1" fill="none"/></svg>
<div class="a" style="left:588px;top:473px;width:86px;height:24px;box-sizing:border-box;border:1.5px solid #0f6cbd;border-radius:4px;background:#fdfdfd"></div>
<div class="a" style="left:688px;top:473px;width:86px;height:24px;box-sizing:border-box;border:1px solid #d0d0d0;border-radius:4px;background:#fdfdfd"></div>
<span class="t" style="font-size:12px;line-height:12px;top:479.00px;color:#1a1a1a;left:616.00px;letter-spacing:-0.103px;">Open</span>
<span class="t" style="font-size:12px;line-height:12px;top:479.00px;color:#1a1a1a;left:713.00px;letter-spacing:-0.247px;">Cancel</span>
<svg class="a" style="left:780px;top:499px" width="10" height="10" viewBox="0 0 10 10" fill="#b4b4b4"><rect x="7.5" y="1" width="2" height="2"/><rect x="4.500" y="4" width="2" height="2"/><rect x="7.500" y="4" width="2" height="2"/><rect x="1.500" y="7" width="2" height="2"/><rect x="4.500" y="7" width="2" height="2"/><rect x="7.500" y="7" width="2" height="2"/></svg>
</div></div>
</body></html>
